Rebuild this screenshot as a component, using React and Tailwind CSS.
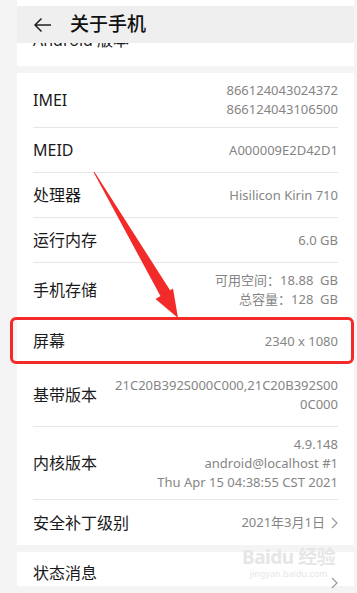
import React from 'react';

const rows = [
  { label: 'IMEI', values: ['866124043024372', '866124043106500'], h: 'h-[55px]' },
  { label: 'MEID', values: ['A000009E2D42D1'], h: 'h-[45px]' },
  { label: '处理器', values: ['Hisilicon Kirin 710'], h: 'h-[45px]' },
  { label: '运行内存', values: ['6.0 GB'], h: 'h-[45px]' },
  { label: '手机存储', values: ['可用空间：18.88  GB', '总容量：128  GB'], h: 'h-[55px]' },
  { label: '屏幕', values: ['2340 x 1080'], h: 'h-[46px]', last: true },
];

const rows2 = [
  { label: '基带版本', values: ['21C20B392S000C000,21C20B392S00', '0C000'], h: 'h-[63px]' },
  { label: '内核版本', values: ['4.9.148', 'android@localhost #1', 'Thu Apr 15 04:38:55 CST 2021'], h: 'h-[73px]' },
];

const Chevron = () => (
  <svg width="7" height="12" viewBox="0 0 7 12" className="ml-[6px]">
    <path d="M1 1 L6 6 L1 11" fill="none" stroke="#9a9a9a" strokeWidth="1.2" />
  </svg>
);

const Row = ({ label, values, h, last }) => (
  <div className="px-[16px]">
    <div className={`${h} flex items-center justify-between ${last ? '' : 'border-b border-[#e6e6e6]'}`}>
      <span className="text-[16px] text-[#1a1a1a] whitespace-nowrap">{label}</span>
      <div className="flex flex-col items-end text-[13px] leading-[19px] text-[#858585] whitespace-nowrap">
        {values.map((v) => (
          <span key={v} className="whitespace-pre">{v}</span>
        ))}
      </div>
    </div>
  </div>
);

export default function App() {
  return (
    <div
      className="relative w-[357px] h-[593px] overflow-hidden bg-[#f4f4f4]"
      style={{ fontFamily: '"Noto Sans", "Noto Sans CJK SC", sans-serif' }}
    >
      <div className="ml-[17px] w-[337px]">
        <div className="h-[6px] bg-white" />
        {/* header */}
        <div className="h-[37px] bg-[#efefef] flex items-center pl-[16px]">
          <svg width="19" height="16" viewBox="0 0 19 16">
            <path d="M18 8 H2 M8.5 1.5 L2 8 L8.5 14.5" fill="none" stroke="#222" strokeWidth="1.5" />
          </svg>
          <span className="ml-[18px] text-[19px] font-medium text-[#111] leading-none">关于手机</span>
        </div>
        {/* scrolled-under strip */}
        <div className="h-[23px] bg-white overflow-hidden px-[16px]">
          <div className="-mt-[13px] text-[16px] text-[#1a1a1a] leading-[20px]">Android 版本</div>
        </div>
        <div className="h-[7px]" />
        {/* main card */}
        <div className="bg-white">
          {rows.map((r) => (
            <Row key={r.label} {...r} />
          ))}
          {rows2.map((r) => (
            <Row key={r.label} {...r} />
          ))}
          <div className="px-[16px]">
            <div className="h-[45px] flex items-center justify-between">
              <span className="text-[16px] text-[#1a1a1a]">安全补丁级别</span>
              <div className="flex items-center text-[13px] text-[#858585]">
                2021年3月1日
                <Chevron />
              </div>
            </div>
          </div>
        </div>
        <div className="h-[7px]" />
        <div className="bg-white h-[34px] px-[16px] relative">
          <div className="h-[42px] flex items-center">
            <span className="text-[16px] text-[#1a1a1a]">状态消息</span>
          </div>
          <div className="absolute right-[16px] top-[25px]">
            <Chevron />
          </div>
        </div>
      </div>

      {/* highlight box */}
      <div className="absolute left-[10px] top-[317px] w-[344px] h-[47px] border-[3px] border-[#f22a2a] rounded-[6px]" />

      {/* arrow */}
      <svg className="absolute left-0 top-0" width="357" height="593" viewBox="0 0 357 593">
        <polygon points="94.4,171.8 93.6,172.2 161.5,298 171.5,292.5" fill="#f22a2a" />
        <polygon points="178,318 155.5,299 173,288.5" fill="#f22a2a" />
      </svg>

      {/* watermark */}
      <div className="absolute left-[242px] top-[548px] flex flex-col items-center text-[#e6e6e6] leading-none">
        <span className="text-[19px] font-bold tracking-tight">Baidu 经验</span>
        <span className="text-[9px] mt-[2px]">jingyan.baidu.com</span>
      </div>
    </div>
  );
}
